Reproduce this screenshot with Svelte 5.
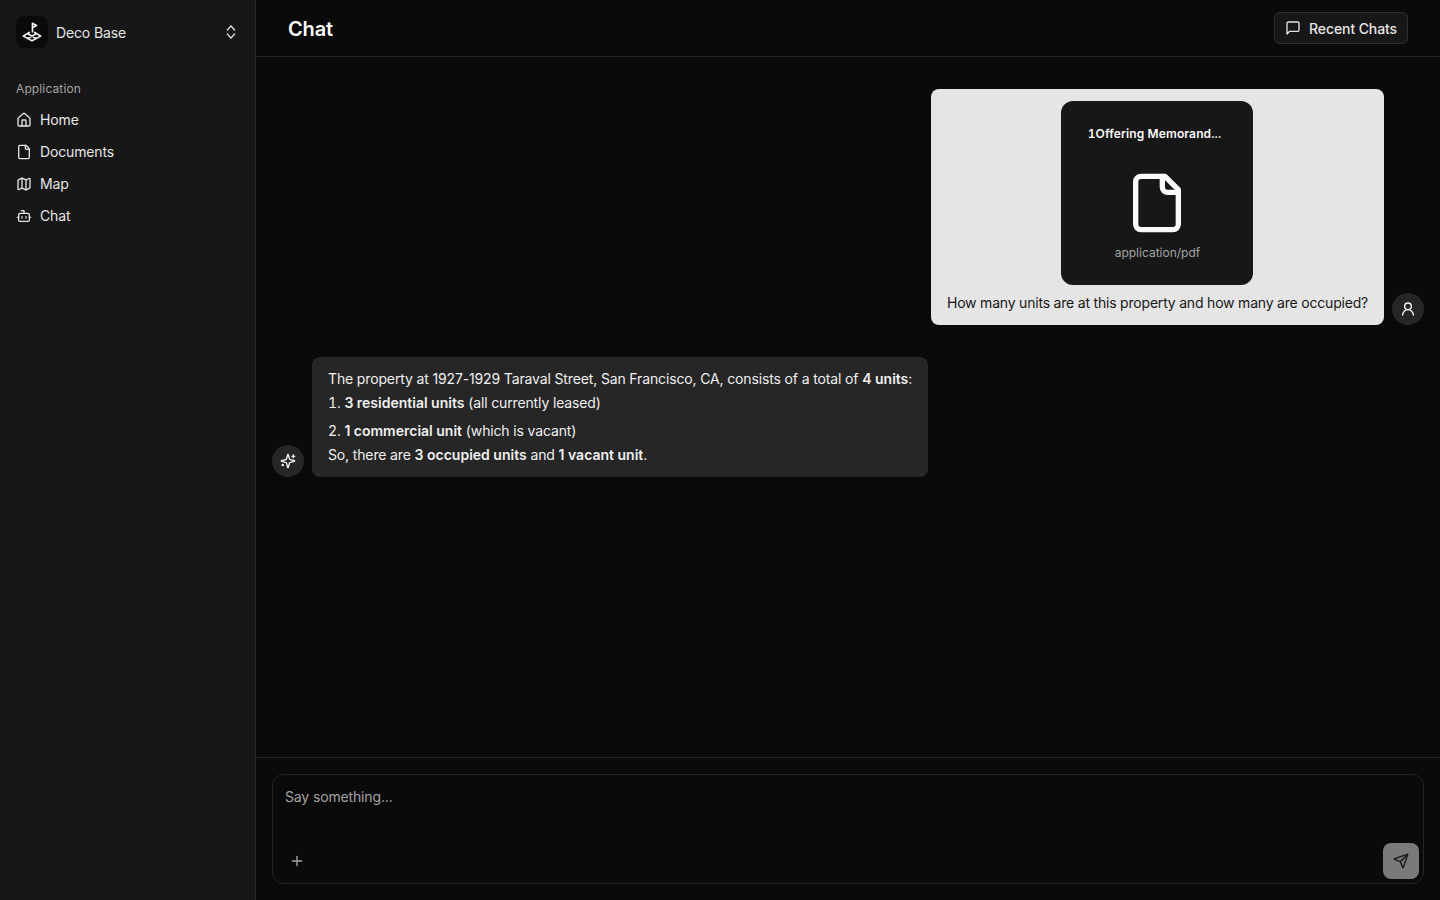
<script>
	const navItems = [
		{ label: 'Home', icon: 'home' },
		{ label: 'Documents', icon: 'file' },
		{ label: 'Map', icon: 'map' },
		{ label: 'Chat', icon: 'bot' }
	];
</script>

{#snippet navIcon(name)}
	<svg class="icon" viewBox="0 0 24 24">
		{#if name === 'home'}
			<path d="M15 21v-8a1 1 0 0 0-1-1h-4a1 1 0 0 0-1 1v8" />
			<path d="M3 10a2 2 0 0 1 .709-1.528l7-5.999a2 2 0 0 1 2.582 0l7 5.999A2 2 0 0 1 21 10v9a2 2 0 0 1-2 2H5a2 2 0 0 1-2-2z" />
		{:else if name === 'file'}
			<path d="M15 2H6a2 2 0 0 0-2 2v16a2 2 0 0 0 2 2h12a2 2 0 0 0 2-2V7Z" />
			<path d="M14 2v4a2 2 0 0 0 2 2h4" />
		{:else if name === 'map'}
			<path d="M14.106 5.553a2 2 0 0 0 1.788 0l3.659-1.83A1 1 0 0 1 21 4.619v12.764a1 1 0 0 1-.553.894l-4.553 2.277a2 2 0 0 1-1.788 0l-4.212-2.106a2 2 0 0 0-1.788 0l-3.659 1.83A1 1 0 0 1 3 19.381V6.618a1 1 0 0 1 .553-.894l4.553-2.277a2 2 0 0 1 1.788 0z" />
			<path d="M15 5.764v15" />
			<path d="M9 3.236v15" />
		{:else}
			<path d="M12 8V4H8" />
			<rect width="16" height="12" x="4" y="8" rx="2" />
			<path d="M2 14h2" />
			<path d="M20 14h2" />
			<path d="M15 13v2" />
			<path d="M9 13v2" />
		{/if}
	</svg>
{/snippet}

<div class="app">
	<aside class="sidebar">
		<div class="brand">
			<div class="logo">
				<svg viewBox="0 0 24 24" width="22" height="22">
					<path d="M12.5 12V2.5l4.5 2.3-4.5 2.2" />
					<path d="M9 12.5 2.5 16.5 12 21.5l9.5-5-6.5-4" />
					<path d="M7.5 14 16.5 19M16.5 14 7.5 19" />
				</svg>
			</div>
			<span class="brand-name">Deco Base</span>
			<svg class="updown" viewBox="0 0 24 24">
				<path d="m6.5 15 5.5 6 5.5-6" />
				<path d="m6.5 9 5.5-6 5.5 6" />
			</svg>
		</div>

		<div class="group-label">Application</div>
		<nav>
			{#each navItems as item}
				<div class="nav-item">
					{@render navIcon(item.icon)}
					<span>{item.label}</span>
				</div>
			{/each}
		</nav>
	</aside>

	<main>
		<header>
			<h1>Chat</h1>
			<button class="recent">
				<svg class="icon" viewBox="0 0 24 24">
					<path d="M21 15a2 2 0 0 1-2 2H7l-4 4V5a2 2 0 0 1 2-2h14a2 2 0 0 1 2 2z" />
				</svg>
				Recent Chats
			</button>
		</header>

		<section class="messages">
			<div class="row right">
				<div class="bubble user">
					<div class="file-card">
						<div class="file-name">1Offering Memorand...</div>
						<svg class="file-icon" viewBox="0 0 24 24">
							<path d="M15 2H6a2 2 0 0 0-2 2v16a2 2 0 0 0 2 2h12a2 2 0 0 0 2-2V7Z" />
							<path d="M14 2v4a2 2 0 0 0 2 2h4" />
						</svg>
						<div class="file-type">application/pdf</div>
					</div>
					<p>How many units are at this property and how many are occupied?</p>
				</div>
				<div class="avatar">
					<svg class="icon" viewBox="0 0 24 24">
						<circle cx="12" cy="8" r="5" />
						<path d="M20 21a8 8 0 0 0-16 0" />
					</svg>
				</div>
			</div>

			<div class="row">
				<div class="avatar">
					<svg class="icon" viewBox="0 0 24 24">
						<path d="M9.937 15.5A2 2 0 0 0 8.5 14.063l-6.135-1.582a.5.5 0 0 1 0-.962L8.5 9.936A2 2 0 0 0 9.937 8.5l1.582-6.135a.5.5 0 0 1 .963 0L14.063 8.5A2 2 0 0 0 15.5 9.937l6.135 1.581a.5.5 0 0 1 0 .964L15.5 14.063a2 2 0 0 0-1.437 1.437l-1.582 6.135a.5.5 0 0 1-.963 0z" />
						<path d="M20 3v4" />
						<path d="M22 5h-4" />
						<path d="M4 17v2" />
						<path d="M5 18H3" />
					</svg>
				</div>
				<div class="bubble bot">
					<p>The property at 1927-1929 Taraval Street, San Francisco, CA, consists of a total of <b>4 units</b>:</p>
					<p><span class="num">1.</span> <b>3 residential units</b> (all currently leased)</p>
					<p class="gap"><span class="num">2.</span> <b>1 commercial unit</b> (which is vacant)</p>
					<p>So, there are <b>3 occupied units</b> and <b>1 vacant unit</b>.</p>
				</div>
			</div>
		</section>

		<footer>
			<div class="composer">
				<div class="placeholder">Say something...</div>
				<div class="composer-bar">
					<svg class="plus" viewBox="0 0 24 24">
						<path d="M5 12h14" />
						<path d="M12 5v14" />
					</svg>
					<button class="send" aria-label="Send">
						<svg class="icon" viewBox="0 0 24 24">
							<path d="M14.536 21.686a.5.5 0 0 0 .937-.024l6.5-19a.496.496 0 0 0-.635-.635l-19 6.5a.5.5 0 0 0-.024.937l7.93 3.18a2 2 0 0 1 1.112 1.11z" />
							<path d="m21.854 2.147-10.94 10.939" />
						</svg>
					</button>
				</div>
			</div>
		</footer>
	</main>
</div>

<style>
	:global(body) {
		margin: 0;
		background: #0a0a0a;
	}
	.app {
		display: flex;
		height: 900px;
		overflow: hidden;
		font-family: Inter, 'Liberation Sans', sans-serif;
		font-size: 14px;
		letter-spacing: -0.01em;
		color: #fafafa;
	}
	svg {
		fill: none;
		stroke: currentColor;
		stroke-width: 2;
		stroke-linecap: round;
		stroke-linejoin: round;
		flex-shrink: 0;
	}
	.icon {
		width: 16px;
		height: 16px;
	}

	.sidebar {
		width: 256px;
		flex-shrink: 0;
		background: #171717;
		border-right: 1px solid #262626;
		padding: 16px;
		box-sizing: border-box;
	}
	.brand {
		display: flex;
		align-items: center;
		height: 32px;
		gap: 8px;
	}
	.logo {
		width: 32px;
		height: 32px;
		border-radius: 8px;
		background: #0a0a0a;
		display: flex;
		align-items: center;
		justify-content: center;
	}
	.logo svg {
		stroke-width: 1.8;
		color: #f5f5f5;
	}
	.brand-name {
		flex: 1;
		color: #e5e5e5;
		line-height: 20px;
		padding-top: 1px;
	}
	.updown {
		width: 16px;
		height: 16px;
		color: #e5e5e5;
		stroke-width: 1.8;
	}
	.group-label {
		margin-top: 24px;
		height: 32px;
		line-height: 33px;
		font-size: 12px;
		letter-spacing: 0.01em;
		color: #a3a3a3;
	}
	nav {
		display: flex;
		flex-direction: column;
	}
	.nav-item {
		display: flex;
		align-items: center;
		gap: 8px;
		height: 32px;
		color: #e5e5e5;
	}
	.nav-item span {
		margin-top: -1px;
	}

	main {
		flex: 1;
		display: flex;
		flex-direction: column;
		min-width: 0;
	}
	header {
		height: 57px;
		box-sizing: border-box;
		border-bottom: 1px solid #262626;
		display: flex;
		align-items: center;
		justify-content: space-between;
		padding: 0 32px;
	}
	h1 {
		margin: 0;
		padding-top: 1px;
		font-size: 20px;
		font-weight: 600;
		line-height: 28px;
		color: #fafafa;
	}
	.recent {
		display: flex;
		align-items: center;
		gap: 8px;
		height: 32px;
		padding: 0 10px;
		background: #171717;
		border: 1px solid #2e2e2e;
		border-radius: 6px;
		color: #e5e5e5;
		font: inherit;
		font-weight: 500;
		letter-spacing: -0.1px;
	}

	.messages {
		flex: 1;
		padding: 32px 16px 0;
		display: flex;
		flex-direction: column;
		gap: 32px;
		min-height: 0;
	}
	.row {
		display: flex;
		align-items: flex-end;
		gap: 8px;
	}
	.row.right {
		justify-content: flex-end;
	}
	.avatar {
		width: 32px;
		height: 32px;
		border-radius: 50%;
		background: #262626;
		display: flex;
		align-items: center;
		justify-content: center;
		flex-shrink: 0;
	}
	.bubble {
		border-radius: 8px;
		line-height: 24px;
		letter-spacing: -0.14px;
	}
	.bubble p {
		margin: 0;
		white-space: nowrap;
	}
	.bubble b {
		font-weight: 600;
		letter-spacing: 0;
	}
	.num {
		font-variant-numeric: tabular-nums;
	}
	.user {
		background: #e5e5e5;
		color: #171717;
		padding: 12px 16px 10px;
		display: flex;
		flex-direction: column;
		align-items: center;
		letter-spacing: -0.2px;
	}
	.bot {
		background: #262626;
		color: #f0f0f0;
		padding: 10px 16px;
		width: 616px;
		box-sizing: border-box;
	}
	.bot .gap {
		margin-top: 4px;
	}
	.file-card {
		width: 192px;
		height: 184px;
		box-sizing: border-box;
		background: #171717;
		color: #fafafa;
		border-radius: 12px;
		display: flex;
		flex-direction: column;
		align-items: center;
		margin-bottom: 6px;
		padding-top: 21px;
	}
	.file-name {
		font-size: 12px;
		font-weight: 600;
		line-height: 24px;
		margin-left: -6px;
		letter-spacing: 0.12px;
		font-variant-numeric: tabular-nums;
	}
	.file-icon {
		width: 64px;
		height: 64px;
		margin-top: 25px;
	}
	.file-type {
		font-size: 12px;
		letter-spacing: 0;
		line-height: 16px;
		color: #a3a3a3;
		margin-top: 9.5px;
	}

	footer {
		height: 143px;
		box-sizing: border-box;
		border-top: 1px solid #262626;
		padding: 16px;
	}
	.composer {
		height: 110px;
		box-sizing: border-box;
		border: 1px solid #262626;
		border-radius: 12px;
		padding: 12px 4px 4px 12px;
		display: flex;
		flex-direction: column;
		justify-content: space-between;
	}
	.placeholder {
		line-height: 20px;
		color: #a3a3a3;
	}
	.composer-bar {
		display: flex;
		align-items: center;
		justify-content: space-between;
	}
	.plus {
		width: 16px;
		height: 16px;
		color: #a3a3a3;
		margin-left: 4px;
	}
	.send {
		width: 36px;
		height: 36px;
		border: 0;
		padding: 0;
		border-radius: 8px;
		background: #7a7a7a;
		color: #171717;
		display: flex;
		align-items: center;
		justify-content: center;
	}
</style>
